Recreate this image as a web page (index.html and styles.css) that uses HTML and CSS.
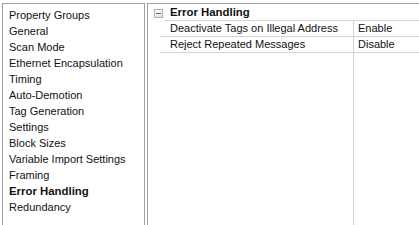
FILE: index.html
```html
<!DOCTYPE html>
<html>
<head>
<meta charset="utf-8">
<link rel="stylesheet" href="styles.css">
</head>
<body>
<div class="wrap">
  <div class="groups">
    <div class="item">Property Groups</div>
    <div class="item">General</div>
    <div class="item">Scan Mode</div>
    <div class="item">Ethernet Encapsulation</div>
    <div class="item">Timing</div>
    <div class="item">Auto-Demotion</div>
    <div class="item">Tag Generation</div>
    <div class="item">Settings</div>
    <div class="item">Block Sizes</div>
    <div class="item">Variable Import Settings</div>
    <div class="item">Framing</div>
    <div class="item sel">Error Handling</div>
    <div class="item">Redundancy</div>
  </div>
  <div class="grid">
    <div class="head">
      <div class="gutter"><span class="minus"></span></div>
      <div class="title">Error Handling</div>
    </div>
    <div class="row">
      <div class="gutter"></div>
      <div class="name">Deactivate Tags on Illegal Address</div>
      <div class="val">Enable</div>
    </div>
    <div class="row">
      <div class="gutter"></div>
      <div class="name">Reject Repeated Messages</div>
      <div class="val">Disable</div>
    </div>
    <div class="row fill">
      <div class="gutter"></div>
      <div class="name"></div>
      <div class="val"></div>
    </div>
  </div>
</div>
</body>
</html>
```
FILE: styles.css
```css
html, body {
  margin: 0;
  padding: 0;
  background: #ffffff;
}
body {
  font-family: "Liberation Sans", Arial, sans-serif;
  font-size: 11px;
  color: #111;
  width: 419px;
  height: 225px;
  overflow: hidden;
}
.wrap {
  display: flex;
  padding: 3px 0 0 2px;
  height: 222px;
  gap: 2px;
}
.groups {
  width: 143px;
  border: 1px solid #a0a0a0;
  border-bottom: none;
  padding: 3px 0 0 6px;
  box-sizing: border-box;
}
.item {
  height: 16px;
  line-height: 16px;
  white-space: nowrap;
}
.item.sel {
  font-weight: bold;
  font-size: 11.4px;
}
.grid {
  flex: 1;
  border-top: 1px solid #a0a0a0;
  border-left: 1px solid #a0a0a0;
  display: flex;
  flex-direction: column;
}
.head {
  display: flex;
  height: 17px;
  line-height: 16px;
}
.row {
  display: flex;
  height: 16px;
  line-height: 15px;
}
.gutter {
  width: 12px;
  flex: none;
  display: flex;
  align-items: center;
  justify-content: center;
}
.head .gutter {
  padding-left: 4px;
  padding-top: 1px;
}
.minus {
  width: 7px;
  height: 7px;
  border: 1px solid #b0b0b0;
  background: linear-gradient(#fafafa, #e4e4e4);
  position: relative;
}
.minus::after {
  content: "";
  position: absolute;
  left: 1px;
  right: 1px;
  top: 3px;
  height: 1px;
  background: #3a6ea5;
}
.title {
  flex: 1;
  font-weight: bold;
  font-size: 11.4px;
  padding-left: 6px;
  border-bottom: 1px solid #d4d4d4;
}
.name {
  width: 194px;
  flex: none;
  padding-left: 10px;
  box-sizing: border-box;
  border-bottom: 1px solid #d4d4d4;
  border-right: 1px solid #d4d4d4;
  white-space: nowrap;
}
.val {
  flex: 1;
  padding-left: 4px;
  border-bottom: 1px solid #d4d4d4;
  white-space: nowrap;
}
.row.fill {
  flex: 1;
}
.row.fill .name, .row.fill .val {
  border-bottom: none;
}
```
